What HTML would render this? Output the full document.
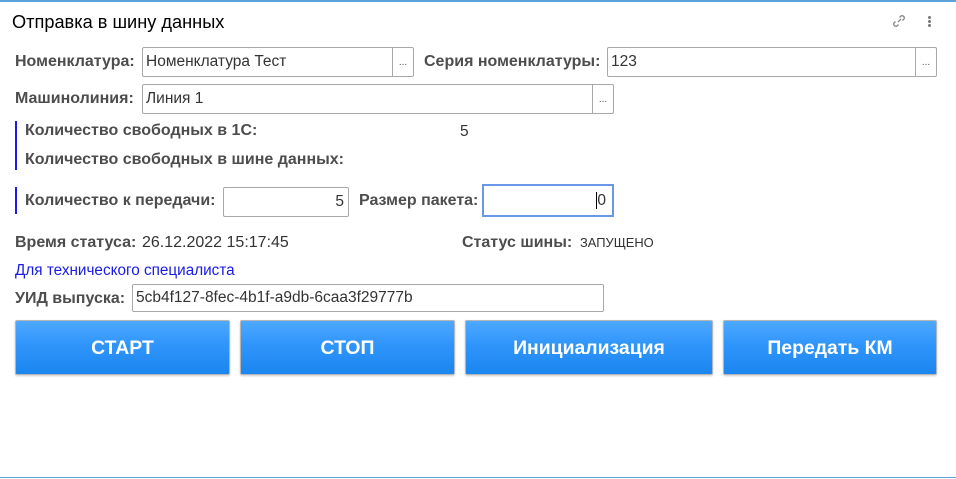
<!DOCTYPE html>
<html><head><meta charset="utf-8"><style>
*{box-sizing:border-box;margin:0;padding:0}
body{width:956px;height:479px;background:#fff;position:relative;overflow:hidden;font-family:"Liberation Sans",Arial,sans-serif;color:#333}
.a{position:absolute;white-space:nowrap;line-height:18px}
.lbl{font-weight:bold;font-size:16px;color:#4d4d4d}
.in{position:absolute;border:1px solid #a8a8a8;border-radius:2px;background:#fff;font-size:15.5px;color:#333;padding:0 0 0 3px;line-height:27px;height:30px}
.dots{position:absolute;top:0;right:0;width:21px;height:28px;border-left:1px solid #a8a8a8;font-size:10px;text-align:center;line-height:30px;color:#555}
.btn{position:absolute;top:320px;height:55px;border:1px solid #b5b5b5;border-radius:2px;background:linear-gradient(#4ea9ff,#2f95fb 45%,#1b86ef);color:#fff;font-weight:bold;font-size:19.4px;text-align:center;line-height:54px;box-shadow:0 1px 2px rgba(0,0,0,.2)}
.bar{position:absolute;left:15px;width:2px;background:#1a1ae6}
</style></head><body>
<div class="a" style="left:0;top:0;width:956px;height:2px;background:#5aa3dc"></div>
<div class="a" style="left:0;top:477px;width:956px;height:1px;background:#5aa3dc"></div>
<div class="a" style="left:12px;top:12px;font-size:18.2px;line-height:21px;color:#000">Отправка в шину данных</div>
<svg class="a" style="left:891px;top:13px" width="16" height="16" viewBox="0 0 16 16" fill="none" stroke="#888" stroke-width="1.3"><path d="M7 9l3-3"/><path d="M8.5 4.5l1.5-1.5a2.2 2.2 0 0 1 3 3l-1.5 1.5"/><path d="M7.5 11.5l-1.5 1.5a2.2 2.2 0 0 1-3-3l1.5-1.5"/></svg>
<div class="a" style="left:928px;top:16px;width:3px;height:3px;background:#777;border-radius:50%;box-shadow:0 4px #777,0 8px #777"></div>

<div class="a lbl" style="left:15px;top:53px">Номенклатура:</div>
<div class="in" style="left:142px;top:47px;width:272px">Номенклатура Тест<div class="dots">...</div></div>
<div class="a lbl" style="left:424px;top:53px">Серия номенклатуры:</div>
<div class="in" style="left:607px;top:47px;width:330px">123<div class="dots">...</div></div>

<div class="a lbl" style="left:15px;top:90px">Машинолиния:</div>
<div class="in" style="left:142px;top:84px;width:472px">Линия 1<div class="dots">...</div></div>

<div class="bar" style="top:121px;height:49px"></div>
<div class="a lbl" style="left:25px;top:122px">Количество свободных в 1С:</div>
<div class="a" style="left:460px;top:123px;font-size:15.5px">5</div>
<div class="a lbl" style="left:25px;top:151px">Количество свободных в шине данных:</div>

<div class="bar" style="top:187px;height:27px"></div>
<div class="a lbl" style="left:25px;top:192px">Количество к передачи:</div>
<div class="in" style="left:223px;top:187px;width:126px;text-align:right;padding-right:4px">5</div>
<div class="a lbl" style="left:359px;top:192px">Размер пакета:</div>
<div class="in" style="left:482px;top:184px;width:132px;height:33px;border:2px solid #6b97e8;border-radius:0;text-align:right;padding-right:6px;line-height:29px"><span style="border-left:1px solid #000">0</span></div>

<div class="a lbl" style="left:15px;top:234px">Время статуса:</div>
<div class="a" style="left:142px;top:234px;font-size:16px">26.12.2022 15:17:45</div>
<div class="a lbl" style="left:462px;top:234px">Статус шины:</div>
<div class="a" style="left:580px;top:234px;font-size:12.9px">ЗАПУЩЕНО</div>

<div class="a" style="left:15px;top:262px;font-size:15.3px;color:#1a1ae6">Для технического специалиста</div>
<div class="a lbl" style="left:15px;top:290px">УИД выпуска:</div>
<div class="in" style="left:132px;top:284px;width:472px;height:28px;line-height:25px">5cb4f127-8fec-4b1f-a9db-6caa3f29777b</div>

<div class="btn" style="left:15px;width:215px">СТАРТ</div>
<div class="btn" style="left:240px;width:215px">СТОП</div>
<div class="btn" style="left:465px;width:248px">Инициализация</div>
<div class="btn" style="left:723px;width:214px">Передать КМ</div>
</body></html>
